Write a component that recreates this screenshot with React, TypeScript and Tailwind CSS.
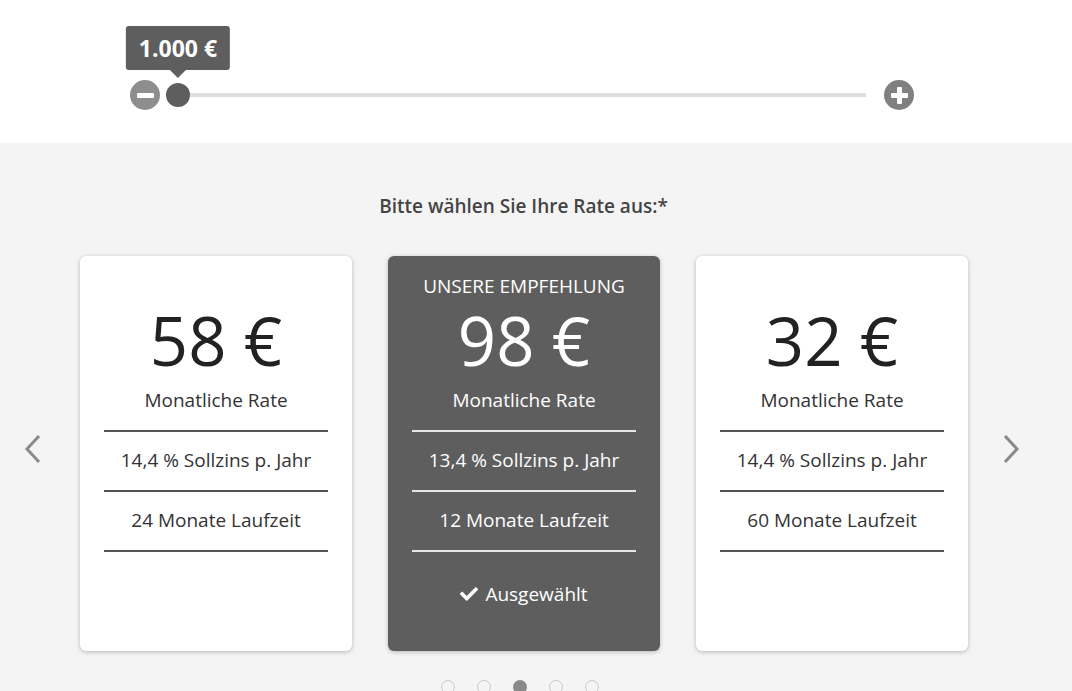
import { FaCheck } from "react-icons/fa";

type Offer = {
  price: string;
  rate: string;
  term: string;
  recommended?: boolean;
};

const OFFERS: Offer[] = [
  { price: "58 €", rate: "14,4 % Sollzins p. Jahr", term: "24 Monate Laufzeit" },
  { price: "98 €", rate: "13,4 % Sollzins p. Jahr", term: "12 Monate Laufzeit", recommended: true },
  { price: "32 €", rate: "14,4 % Sollzins p. Jahr", term: "60 Monate Laufzeit" },
];

function Chevron({ dir }: { dir: "left" | "right" }) {
  return (
    <svg width="18" height="30" viewBox="0 0 18 30" fill="none">
      <path
        d={dir === "left" ? "M15 3 L4 15 L15 27" : "M3 3 L14 15 L3 27"}
        stroke="#8a8a8a"
        strokeWidth="3"
        strokeLinecap="square"
      />
    </svg>
  );
}

function OfferCard({ offer }: { offer: Offer }) {
  const dark = offer.recommended;
  const line = dark ? "bg-[#e6e6e6]" : "bg-[#555]";
  return (
    <div
      className={`flex h-[395px] w-[272px] flex-col rounded-[6px] shadow-[0_1px_4px_rgba(0,0,0,0.25)] ${
        dark ? "bg-[#5e5e5e] text-white" : "bg-white text-[#333]"
      }`}
    >
      <div className="mt-[16px] h-[28px] text-center text-[19px] leading-[28px]">
        {dark ? "UNSERE EMPFEHLUNG" : ""}
      </div>
      <div
        className={`mt-[5px] h-[70px] text-center text-[67px] leading-[70px] ${dark ? "text-white" : "text-[#222]"}`}
      >
        {offer.price}
      </div>
      <div className="mt-[12px] h-[26px] text-center text-[19px] leading-[26px]">Monatliche Rate</div>
      <div className="mx-[24px] mt-[17px]">
        <div className={`h-[1.5px] ${line}`} />
        <div className="flex h-[58.5px] items-center justify-center pb-[1px] text-[19px]">{offer.rate}</div>
        <div className={`h-[1.5px] ${line}`} />
        <div className="flex h-[58.5px] items-center justify-center pb-[1px] text-[19px]">{offer.term}</div>
        <div className={`h-[1.5px] ${line}`} />
      </div>
      {dark && (
        <div className="mt-[28px] flex items-center justify-center gap-[7px] text-[19px]">
          <FaCheck className="h-[18px] w-[18px]" />
          <span>Ausgewählt</span>
        </div>
      )}
    </div>
  );
}

export default function App() {
  return (
    <div
      className="min-h-screen bg-[#f4f4f4]"
      style={{ fontFamily: '"Open Sans", "Noto Sans", sans-serif' }}
    >
      <div className="h-[143px] bg-white pt-[80px]">
        <div className="flex items-center pl-[130px]">
          <div className="flex h-[30px] w-[30px] items-center justify-center rounded-full bg-[#8e8e8e]">
            <div className="h-[5px] w-[17px] rounded-[1px] bg-white" />
          </div>
          <div className="relative ml-[6px] h-[24px] w-[24px] rounded-full bg-[#5e5e5e]">
            <div className="absolute bottom-[29px] left-1/2 -translate-x-1/2">
              <div className="whitespace-nowrap rounded-[3px] bg-[#5e5e5e] px-[13px] text-[23px] font-bold leading-[44px] text-white">
                1.000 €
              </div>
              <div className="mx-auto h-0 w-0 border-x-[8px] border-t-[8px] border-x-transparent border-t-[#5e5e5e]" />
            </div>
          </div>
          <div className="h-[4px] w-[676px] bg-[#dedede]" />
          <div className="ml-[18px] flex h-[30px] w-[30px] items-center justify-center rounded-full bg-[#808080]">
            <div className="relative h-[17px] w-[17px]">
              <div className="absolute left-0 top-[6px] h-[5px] w-[17px] rounded-[1px] bg-white" />
              <div className="absolute left-[6px] top-0 h-[17px] w-[5px] rounded-[1px] bg-white" />
            </div>
          </div>
        </div>
      </div>

      <div className="pr-[25px] pt-[51px] text-center text-[19px] font-semibold leading-[24px] text-[#444]">
        Bitte wählen Sie Ihre Rate aus:*
      </div>

      <div className="mt-[38px] flex">
        <div className="flex w-[80px] items-center pb-[10px] pl-[23px]">
          <Chevron dir="left" />
        </div>
        <div className="flex gap-[36px]">
          {OFFERS.map((o) => (
            <OfferCard key={o.price} offer={o} />
          ))}
        </div>
        <div className="flex flex-1 items-center pb-[10px] pl-[35px]">
          <Chevron dir="right" />
        </div>
      </div>

      <div className="mt-[29px] flex justify-center gap-[22px] pb-[10px] pr-[32px]">
        {[0, 1, 2, 3, 4].map((i) => (
          <div
            key={i}
            className={`h-[14px] w-[14px] rounded-full ${
              i === 2 ? "bg-[#8a8a8a]" : "border border-[#c8c8c8] bg-transparent"
            }`}
          />
        ))}
      </div>
    </div>
  );
}
